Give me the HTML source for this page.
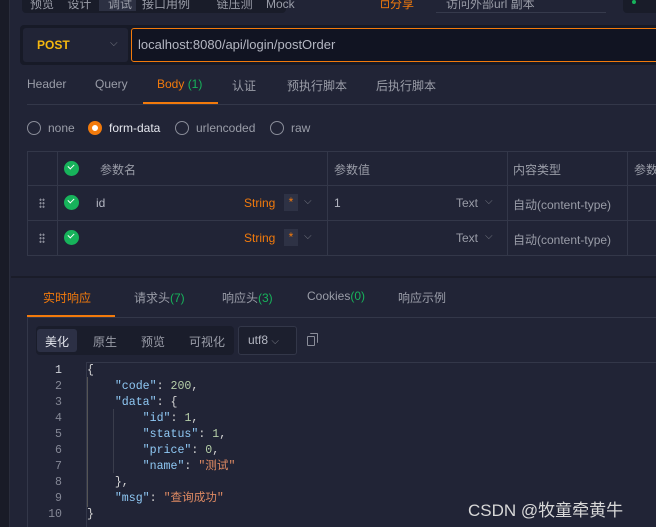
<!DOCTYPE html>
<html><head><meta charset="utf-8"><style>
*{margin:0;padding:0;box-sizing:border-box}
body{width:656px;height:527px;overflow:hidden;background:#212436;font-family:"Liberation Sans","Noto Sans CJK SC",sans-serif;font-size:12px;color:#b4b7c2;position:relative}
.a{position:absolute;white-space:nowrap}
.o{color:#f27a0c}.g{color:#17b35b}
.chk{position:absolute;width:15px;height:15px;border-radius:50%;background:#17b35b}
.chk:after{content:"";position:absolute;left:4px;top:3px;width:5px;height:3px;border-left:1.5px solid #fff;border-bottom:1.5px solid #fff;transform:rotate(-45deg)}
.radio{position:absolute;width:14px;height:14px;border-radius:50%;border:1px solid #8a8d99}
.hl{position:absolute;height:1px;background:#333749}
.vl{position:absolute;width:1px;background:#333749}
.code{font-family:"Liberation Mono","DejaVu Sans Mono","Noto Sans CJK SC",monospace;font-size:11.6px}
.k{color:#8fc8f4}.n{color:#b5cea8}.s{color:#df8a63}
.dots{position:absolute;width:6px;height:10px;background:radial-gradient(circle,#8a8d99 1px,transparent 1.2px) 0 0/3px 3.5px}
</style></head><body>
<div class="a" style="left:0;top:0;width:10px;height:527px;background:#191b27;border-right:1px solid #2a2d3c"></div>
<!-- top bar -->
<div class="a" style="left:22px;top:0;width:264px;height:13px;background:#191c29;border-radius:0 0 4px 4px"></div>
<div class="a" style="left:99px;top:0;width:37px;height:11px;background:#2c3042"></div>
<div class="a" style="left:30px;top:-5px;font-size:12px;color:#9a9da8">预览&nbsp;&nbsp;&nbsp;&nbsp;设计&nbsp;&nbsp;&nbsp;&nbsp;&nbsp;调试&nbsp;&nbsp;&nbsp;接口用例&nbsp;&nbsp;&nbsp;&nbsp;&nbsp;&nbsp;&nbsp;&nbsp;链压测&nbsp;&nbsp;&nbsp;&nbsp;Mock</div>
<div class="a o" style="left:380px;top:-5px">⊡分享</div>
<div class="a" style="left:446px;top:-5px;color:#9a9da8">访问外部url 副本</div>
<div class="a" style="left:436px;top:12px;width:170px;height:1px;background:#363a4c"></div>
<div class="a" style="left:623px;top:0;width:40px;height:13px;background:#191c29;border-radius:0 0 0 4px"></div>
<div class="a" style="left:632px;top:0;width:4px;height:4px;border-radius:50%;background:#17b35b"></div>
<!-- url row -->
<div class="a" style="left:20px;top:25px;width:640px;height:40px;background:#171a27;border-radius:4px"></div>
<div class="a" style="left:23px;top:28px;width:105px;height:34px;background:#212436;border-radius:3px"></div>
<div class="a" style="left:37px;top:38px;color:#f5b70f;font-weight:bold;font-size:12px">POST</div>
<div class="a" style="left:110px;top:38px;color:#7a7d88;font-size:10px">⌵</div>
<div class="a" style="left:131px;top:28px;width:530px;height:34px;background:#111422;border:1px solid #f27a0c;border-radius:3px"></div>
<div class="a" style="left:138px;top:37px;font-size:13px;color:#b4b7c2">localhost:8080/api/login/postOrder</div>
<!-- tabs -->
<div class="a" style="left:27px;top:77px;color:#9a9da8">Header</div>
<div class="a" style="left:95px;top:77px;color:#9a9da8">Query</div>
<div class="a o" style="left:157px;top:77px">Body <span class="g">(1)</span></div>
<div class="a" style="left:232px;top:77px;color:#9a9da8">认证</div>
<div class="a" style="left:287px;top:77px;color:#9a9da8">预执行脚本</div>
<div class="a" style="left:376px;top:77px;color:#9a9da8">后执行脚本</div>
<div class="hl" style="left:27px;top:104px;width:640px"></div>
<div class="a" style="left:143px;top:102px;width:75px;height:2px;background:#f27a0c"></div>
<!-- radios -->
<div class="radio" style="left:27px;top:121px"></div><div class="a" style="left:48px;top:121px;color:#9a9da8">none</div>
<div class="radio" style="left:88px;top:121px;border:4px solid #f27a0c;background:#fff"></div><div class="a" style="left:109px;top:121px;color:#e5e7ee">form-data</div>
<div class="radio" style="left:175px;top:121px"></div><div class="a" style="left:196px;top:121px;color:#9a9da8">urlencoded</div>
<div class="radio" style="left:270px;top:121px"></div><div class="a" style="left:291px;top:121px;color:#9a9da8">raw</div>
<!-- table -->
<div class="hl" style="left:27px;top:151px;width:640px"></div>
<div class="hl" style="left:27px;top:185px;width:640px"></div>
<div class="hl" style="left:27px;top:220px;width:640px"></div>
<div class="hl" style="left:27px;top:255px;width:640px"></div>
<div class="vl" style="left:27px;top:151px;height:105px"></div>
<div class="vl" style="left:57px;top:151px;height:105px"></div>
<div class="vl" style="left:327px;top:151px;height:105px"></div>
<div class="vl" style="left:507px;top:151px;height:105px"></div>
<div class="vl" style="left:627px;top:151px;height:105px"></div>
<div class="chk" style="left:64px;top:161px"></div>
<div class="a" style="left:100px;top:161px;color:#9a9da8">参数名</div>
<div class="a" style="left:334px;top:161px;color:#9a9da8">参数值</div>
<div class="a" style="left:513px;top:161px;color:#9a9da8">内容类型</div>
<div class="a" style="left:634px;top:161px;color:#9a9da8">参数</div>
<div class="dots" style="left:39px;top:198px"></div>
<div class="chk" style="left:64px;top:195px"></div>
<div class="a" style="left:96px;top:196px">id</div>
<div class="a o" style="left:244px;top:196px">String</div>
<div class="a" style="left:284px;top:194px;width:14px;height:17px;background:#2e3245;color:#f27a0c;text-align:center;line-height:17px">*</div>
<div class="a" style="left:304px;top:196px;color:#7a7d88;font-size:10px">⌵</div>
<div class="a" style="left:334px;top:196px">1</div>
<div class="a" style="left:456px;top:196px;color:#9a9da8">Text</div>
<div class="a" style="left:485px;top:196px;color:#7a7d88;font-size:10px">⌵</div>
<div class="a" style="left:513px;top:196px;color:#9a9da8">自动(content-type)</div>
<div class="dots" style="left:39px;top:233px"></div>
<div class="chk" style="left:64px;top:230px"></div>
<div class="a o" style="left:244px;top:231px">String</div>
<div class="a" style="left:284px;top:229px;width:14px;height:17px;background:#2e3245;color:#f27a0c;text-align:center;line-height:17px">*</div>
<div class="a" style="left:304px;top:231px;color:#7a7d88;font-size:10px">⌵</div>
<div class="a" style="left:456px;top:231px;color:#9a9da8">Text</div>
<div class="a" style="left:485px;top:231px;color:#7a7d88;font-size:10px">⌵</div>
<div class="a" style="left:513px;top:231px;color:#9a9da8">自动(content-type)</div>
<!-- separator -->
<div class="a" style="left:11px;top:276px;width:650px;height:2px;background:#1a1c29"></div>
<!-- response tabs -->
<div class="a o" style="left:43px;top:289px">实时响应</div>
<div class="a" style="left:134px;top:289px;color:#9a9da8">请求头<span class="g">(7)</span></div>
<div class="a" style="left:222px;top:289px;color:#9a9da8">响应头<span class="g">(3)</span></div>
<div class="a" style="left:307px;top:289px;color:#9a9da8">Cookies<span class="g">(0)</span></div>
<div class="a" style="left:398px;top:289px;color:#9a9da8">响应示例</div>
<div class="hl" style="left:27px;top:317px;width:640px"></div>
<div class="a" style="left:27px;top:315px;width:88px;height:2px;background:#f27a0c"></div>
<div class="vl" style="left:27px;top:317px;height:210px"></div>
<!-- toolbar -->
<div class="a" style="left:36px;top:326px;width:198px;height:29px;background:#1a1d2b;border-radius:4px"></div>
<div class="a" style="left:37px;top:329px;width:40px;height:23px;background:#2c3045;border-radius:3px"></div>
<div class="a" style="left:45px;top:333px;color:#e5e7ee">美化</div>
<div class="a" style="left:93px;top:333px;color:#9a9da8">原生</div>
<div class="a" style="left:141px;top:333px;color:#9a9da8">预览</div>
<div class="a" style="left:189px;top:333px;color:#9a9da8">可视化</div>
<div class="a" style="left:238px;top:326px;width:59px;height:29px;border:1px solid #333749;border-radius:3px;background:#1c1f2e"></div>
<div class="a" style="left:248px;top:333px;color:#b4b7c2">utf8 <span style="font-size:10px;color:#7a7d88">⌵</span></div>
<div class="a" style="left:307px;top:336px;width:8px;height:10px;border:1px solid #8a8d99;border-radius:1px"></div>
<div class="a" style="left:310px;top:333px;width:8px;height:10px;border-top:1px solid #8a8d99;border-right:1px solid #8a8d99;border-radius:1px"></div>
<!-- code -->
<div class="hl" style="left:86px;top:362px;width:575px"></div>
<div class="vl" style="left:86px;top:362px;height:165px"></div>
<div class="a" style="left:87px;top:377px;width:1px;height:130px;background:#555"></div>
<div class="a" style="left:113px;top:409px;width:1px;height:64px;background:#3a3d4c"></div>
<div class="a code" style="left:40px;top:363px;width:22px;text-align:right;line-height:16px;color:#858896"><span style="color:#d0d2da">1</span><br>2<br>3<br>4<br>5<br>6<br>7<br>8<br>9<br>10</div>
<pre class="code" style="position:absolute;left:87px;top:363px;line-height:16px;color:#d4d4d4;white-space:pre">{
    <span class="k">"code"</span>: <span class="n">200</span>,
    <span class="k">"data"</span>: {
        <span class="k">"id"</span>: <span class="n">1</span>,
        <span class="k">"status"</span>: <span class="n">1</span>,
        <span class="k">"price"</span>: <span class="n">0</span>,
        <span class="k">"name"</span>: <span class="s">"测试"</span>
    },
    <span class="k">"msg"</span>: <span class="s">"查询成功"</span>
}</pre>
<div class="a" style="left:468px;top:496px;font-size:17px;color:#d8d8d8">CSDN @牧童牵黄牛</div>
</body></html>
